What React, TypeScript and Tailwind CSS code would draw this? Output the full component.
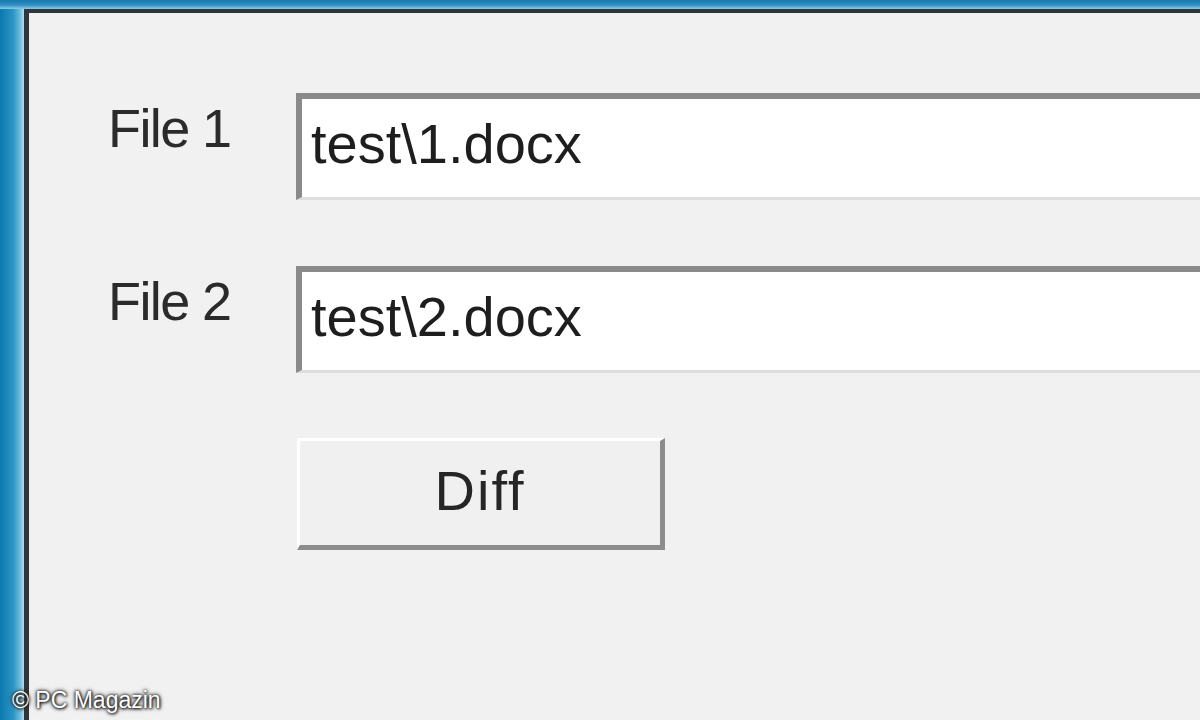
import React from "react";

// One "File N" row: label on the left, sunken text box on the right
const FileRow = ({ label, value }: { label: string; value: string }) => {
  return (
    <div className="flex">
      <div className="w-[189px] shrink-0 pt-[8px] pl-[1px] text-[54px] leading-none tracking-[-1.6px] text-[#2b2b2b]">
        {label}
      </div>
      <div className="w-[1000px] h-[107px] shrink-0 bg-white border-t-[6px] border-l-[6px] border-b-[3px] border-t-[#8a8a8a] border-l-[#8a8a8a] border-b-[#dedede] pl-[9px] pt-[17px] text-[56px] leading-none text-[#1e1e1e]">
        {value}
      </div>
    </div>
  );
};

export default function App() {
  return (
    <div
      className="relative flex w-[1200px] h-[720px] overflow-hidden bg-[#1a84b8] [font-variant-ligatures:none] [font-feature-settings:'liga'_0]"
      style={{ fontFamily: '"Liberation Sans", Arial, sans-serif' }}
    >
      {/* top window edge */}
      <div className="absolute left-0 top-0 w-full h-[9px] bg-[linear-gradient(to_bottom,#1778ad,#2f8fc3_55%,#8ccbe8)]" />

      {/* left window edge */}
      <div className="w-[24px] shrink-0 bg-[linear-gradient(to_right,#0b78ae,#2b95c6_55%,#6fbfe2_85%,#b3e0f2)]" />

      {/* dialog body */}
      <div className="relative flex-1 mt-[9px] border-l-[5px] border-t-[4px] border-[#2f363c] bg-[#f1f1f1]">
        <div className="flex flex-col pl-[78px] pt-[80px]">
          <FileRow label="File 1" value="test\1.docx" />
          <div className="h-[66px]" />
          <FileRow label="File 2" value="test\2.docx" />
          <div className="h-[65px]" />
          <div className="pl-[190px]">
            <button className="w-[368px] h-[112px] flex items-center justify-center pb-[4px] bg-[#f0f0f0] border-t-[3px] border-l-[3px] border-r-[5px] border-b-[5px] border-t-white border-l-white border-r-[#8c8c8c] border-b-[#8c8c8c] text-[56px] leading-none tracking-[2px] text-[#252525]">
              Diff
            </button>
          </div>
        </div>
      </div>

      {/* watermark */}
      <div className="absolute left-[12px] bottom-[8px] text-[23px] leading-none text-white [text-shadow:0_0_3px_#000,0_0_5px_#333,1px_1px_3px_#333]">
        © PC Magazin
      </div>
    </div>
  );
}
